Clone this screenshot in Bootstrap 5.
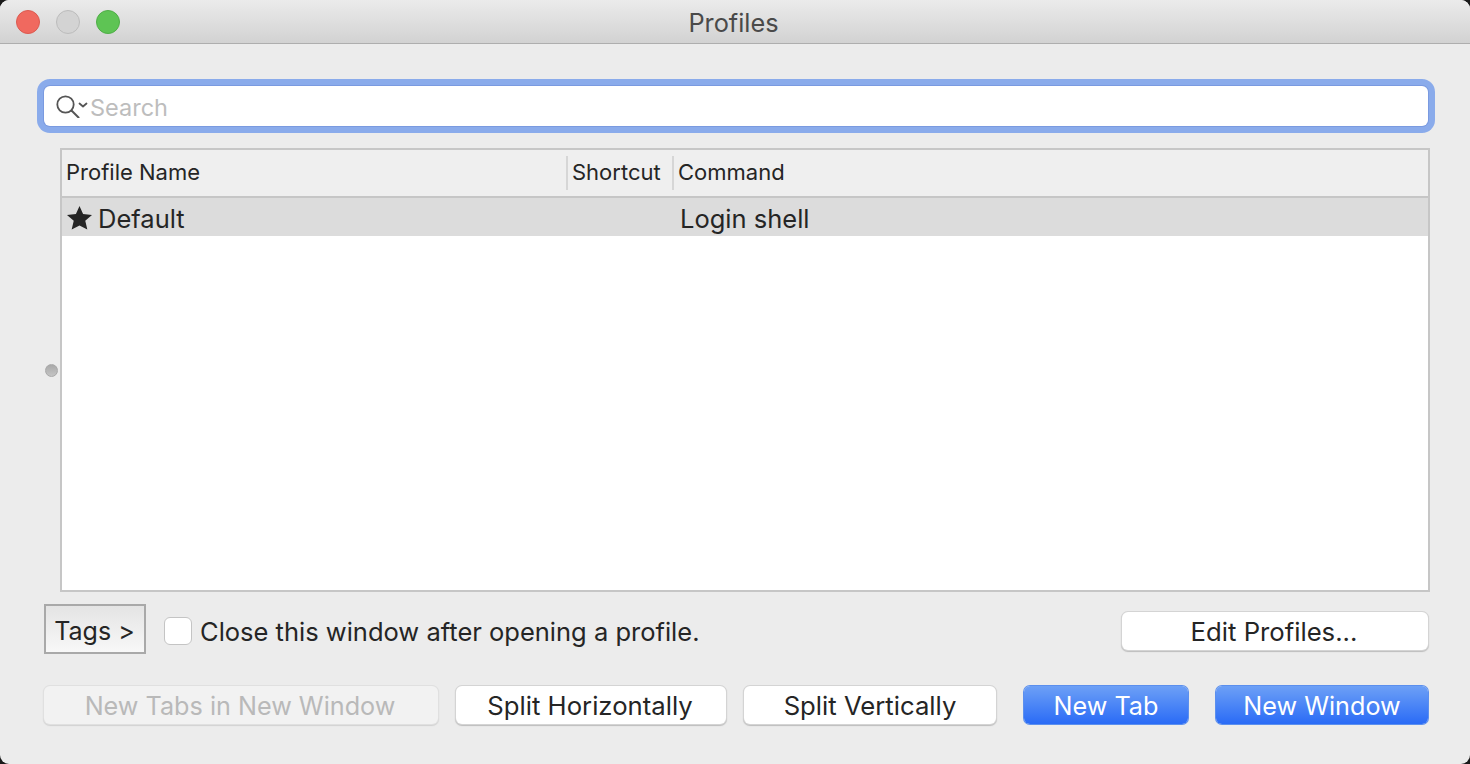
<!DOCTYPE html>
<html lang="en">
<head>
<meta charset="utf-8">
<title>Profiles</title>
<link href="https://cdn.jsdelivr.net/npm/bootstrap@5.3.0/dist/css/bootstrap.min.css" rel="stylesheet">
<style>
html,body{height:100%;background:#1a1a1a;margin:0}
body{overflow:hidden;font-family:Inter,"Noto Sans",sans-serif;color:#252525}
.win{height:764px;width:1470px;background:#ececec;border-radius:9px;overflow:hidden}
.titlebar{height:44px;background:linear-gradient(#ebebeb,#d2d2d2);border-bottom:1px solid #aeaeae;position:relative;flex:none}
.titletext{font-size:25.3px;color:#4a4a4a;line-height:46px;padding-right:3px}
.lights{position:absolute;left:16px;top:10px;gap:16px}
.light{width:24px;height:24px;border-radius:50%;border:1px solid}
.l-r{background:#f0695f;border-color:#dc5a50}
.l-g{background:#d3d3d3;border-color:#bcbcbc}
.l-v{background:#5ec454;border-color:#4fae47}
.content{padding:42px 40px 0 44px}
.searchbox{height:40px;background:#fff;border-radius:6px;box-shadow:0 0 0 1px #7a9ae0,0 0 0 7px #8aabeb;padding-left:12px;margin-right:2px;font-size:23.5px;color:#bdbdbd}
.searchbox svg{flex:none}
.searchbox span{padding-top:4px}
.midrow{margin-top:22px}
.gutter{width:16px;flex:none}
.dot{width:13px;height:13px;border-radius:50%;background:linear-gradient(#a9a9a9,#c4c4c4);border:1px solid #a8a8a8;margin-left:1px}
.tbl{height:444px;width:1370px;border:2px solid #c6c6c6;background:#fff}
.thead{height:48px;background:#efefef;border-bottom:2px solid #c6c6c6;font-size:22px;line-height:1;flex:none}
.th{height:34px;padding-left:4px;padding-bottom:2px}
.th1{width:504px}
.th2{width:106px;border-left:2px solid #d6d6d6}
.th3{border-left:2px solid #d6d6d6}
.trow{height:38px;background:#dcdcdc;font-size:25.5px;flex:none;padding-top:4px}
.td1{width:618px;padding-left:5px;gap:6px}
.td1 svg{margin-top:-2px}
.ctlrow{margin-top:12px;height:50px;font-size:25.5px}
.ctllabel{padding-top:6px}
.tagsbtn{width:102px;height:50px;border:2px solid #a9a9a9;background:linear-gradient(#e4e4e4,#f8f8f8);border-radius:0;font-size:25px;color:#252525;padding:5px 1px 0 0}
.chk{width:28px;height:28px;margin:4px 8px 0 18px;background:#fff;border:1px solid #c4c4c4;border-radius:6px;flex:none}
.mbtn{height:38px;border-radius:6px;font-size:25.7px;line-height:1;padding:2px 0 0;background:#fff;color:#252525;border:0;box-shadow:0 0 0 1px #d4d4d4,0 1px 1px 1px #bdbdbd}
.mbtn:hover,.mbtn:focus{background:#fff;color:#252525}
.w-edit{width:306px;margin-left:auto;margin-right:2px;margin-top:4px;padding-right:2px}
.btnrow{margin-top:32px;margin-right:2px}
.w-a{width:394px;margin-right:18px}
.w-b{width:270px;margin-right:18px;padding-right:2px}
.w-c{width:252px;margin-right:28px}
.w-d{width:164px;margin-right:28px}
.w-e{width:212px}
.mbtn.off{background:#f2f2f2;color:#b9b9b9;box-shadow:0 0 0 1px #e0e0e0,0 1px 1px 1px #d2d2d2;opacity:1;font-size:25.2px;padding:3px 2px 0 0}
.mbtn.pri,.mbtn.pri:hover,.mbtn.pri:focus{background:linear-gradient(#6da0f6,#2a6bf6);color:#fff;box-shadow:0 0 0 1px #5b8fee;font-size:25.2px;padding-top:3px}
</style>
</head>
<body>
<div class="win d-flex flex-column">
  <div class="titlebar text-center">
    <div class="lights d-flex"><span class="light l-r"></span><span class="light l-g"></span><span class="light l-v"></span></div>
    <div class="titletext">Profiles</div>
  </div>
  <div class="content flex-grow-1">
    <div class="searchbox d-flex align-items-center">
      <svg width="34" height="24" viewBox="0 0 34 24" fill="none" stroke="#555" aria-hidden="true"><circle cx="9.5" cy="10.5" r="8.2" stroke-width="1.8"/><path d="M15.5 16.5l7 7" stroke-width="2" stroke-linecap="round"/><path d="M23.5 9.5l3.5 3 3.5-3" stroke-width="1.8" stroke-linecap="round" stroke-linejoin="round"/></svg>
      <span>Search</span>
    </div>
    <div class="midrow d-flex align-items-center">
      <div class="gutter"><div class="dot"></div></div>
      <div class="tbl d-flex flex-column">
        <div class="thead d-flex align-items-center">
          <div class="th th1 d-flex align-items-center">Profile Name</div>
          <div class="th th2 d-flex align-items-center">Shortcut</div>
          <div class="th th3 d-flex align-items-center">Command</div>
        </div>
        <div class="trow d-flex align-items-center">
          <div class="td1 d-flex align-items-center"><svg width="25" height="24" viewBox="0.5 0.5 23 22" aria-hidden="true"><path fill="#252525" d="M12 .5l3.3 7.4 8.2.8-6.2 5.4 1.9 8L12 18.4l-7.2 3.7 1.9-8L.5 8.7l8.2-.8z"/></svg><span>Default</span></div>
          <div class="td3">Login shell</div>
        </div>
      </div>
    </div>
    <div class="ctlrow d-flex align-items-center">
      <button type="button" class="btn tagsbtn">Tags &gt;</button>
      <span class="chk"></span>
      <span class="ctllabel">Close this window after opening a profile.</span>
      <button type="button" class="btn mbtn w-edit">Edit Profiles...</button>
    </div>
    <div class="btnrow d-flex">
      <button type="button" class="btn mbtn off w-a">New Tabs in New Window</button>
      <button type="button" class="btn mbtn w-b">Split Horizontally</button>
      <button type="button" class="btn mbtn w-c">Split Vertically</button>
      <button type="button" class="btn mbtn pri w-d">New Tab</button>
      <button type="button" class="btn mbtn pri w-e">New Window</button>
    </div>
  </div>
</div>
<script src="https://cdn.jsdelivr.net/npm/bootstrap@5.3.0/dist/js/bootstrap.bundle.min.js"></script>
</body>
</html>
